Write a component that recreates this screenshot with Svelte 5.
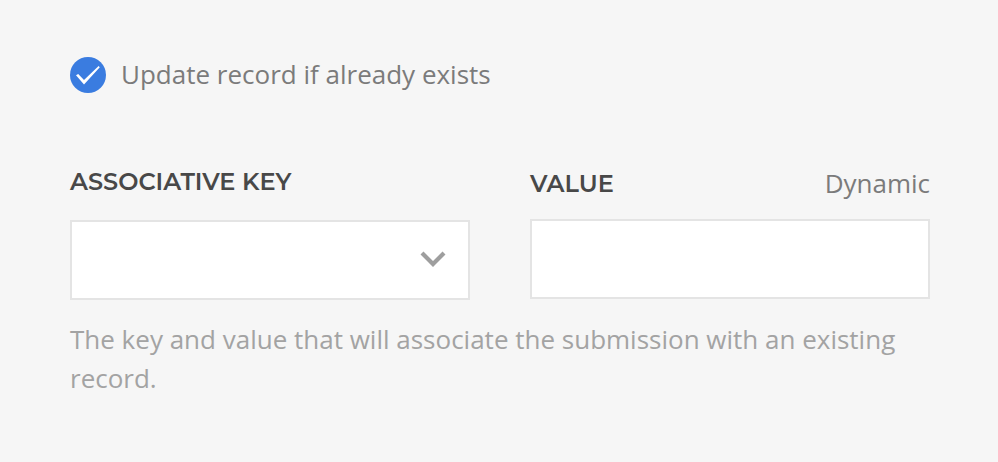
<script>
  let checked = $state(true);
  let value = $state('');
</script>

<main>
  <button class="option" role="checkbox" aria-checked={checked} onclick={() => (checked = !checked)}>
    <svg class="check" viewBox="0 0 36 36">
      <circle cx="18" cy="18" r="18" fill={checked ? '#3a7ce0' : '#ccc'} />
      <path d="M6 18.2 8.2 16.9 14 22.9 28.6 9 29.8 10.3 14 27.4Z" fill="#fff" />
    </svg>
    <span>Update record if already exists</span>
  </button>

  <div class="fields">
    <section class="key">
      <header><h2>ASSOCIATIVE KEY</h2></header>
      <div class="box select">
        <svg viewBox="0 0 26 16" width="26" height="16">
          <path d="M2 2 13 13 24 2" fill="none" stroke="#9e9e9e" stroke-width="4.2" />
        </svg>
      </div>
    </section>
    <section class="value">
      <header><h2>VALUE</h2><span class="dynamic">Dynamic</span></header>
      <input class="box" aria-label="Value" bind:value />
    </section>
  </div>

  <p>The key and value that will associate the submission with an existing record.</p>
</main>

<style>
  :global(body) { margin: 0; background: #f6f6f6; }
  main { box-sizing: border-box; width: 998px; height: 462px; padding: 57px 68px 0 70px; background: #f6f6f6; font-family: "Open Sans", sans-serif; color: #7b7b7b; }
  .option { display: flex; align-items: center; gap: 15px; height: 36px; padding: 0; border: 0; background: none; color: #7b7b7b; font: 26px/36px "Open Sans", sans-serif; }
  .option span { padding-bottom: 2px; }
  .check { width: 36px; height: 36px; }
  .fields { display: flex; gap: 60px; margin-top: 72px; }
  section { width: 400px; }
  header { display: flex; justify-content: space-between; align-items: center; height: 36px; }
  h2 { margin: 0; font: 600 24px/36px Montserrat, "Open Sans", sans-serif; color: #484848; }
  .key header { height: 34px; margin-bottom: 21px; }
  .value header { height: 38px; margin-bottom: 16px; }
  .dynamic { padding-bottom: 2px; font-size: 26px; line-height: 36px; }
  .box { display: block; box-sizing: border-box; width: 400px; height: 80px; border: 2px solid #e4e4e4; border-radius: 0; background: #fff; outline: 0; }
  .select { display: flex; align-items: center; justify-content: flex-end; padding: 0 22px 2px 0; }
  p { margin: 20px 0 0; color: #a3a3a3; font-size: 26px; line-height: 39px; }
</style>
